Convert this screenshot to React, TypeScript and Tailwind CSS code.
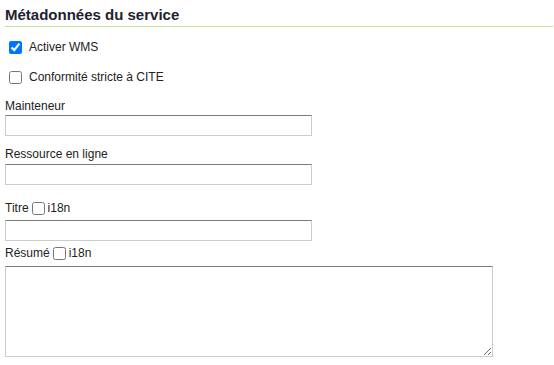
import React from 'react'

const inputCls =
  'block w-[307px] h-[21px] border border-[#cccccc] border-t-[#7a7a7a] bg-white'

const App: React.FC = () => {
  return (
    <div className="min-h-[365px] bg-white pl-[5px] pr-[1px] text-[12px] leading-[15px] text-[#222] font-['Liberation_Sans',Arial,sans-serif]">
      <h3 className="pt-[7px] pb-[3px] text-[15px] leading-[16px] font-bold text-[#1e2230] border-b border-[#c3e09a]">
        Métadonnées du service
      </h3>

      <label className="flex items-center mt-[13px] h-[15px]">
        <input type="checkbox" defaultChecked className="w-[13px] h-[13px] ml-[4px] mr-[7px] accent-[#0075ff]" />
        Activer WMS
      </label>
      <label className="flex items-center mt-[15px] h-[15px]">
        <input type="checkbox" className="w-[13px] h-[13px] ml-[4px] mr-[7px]" />
        Conformité stricte à CITE
      </label>

      <div className="mt-[14px]">Mainteneur</div>
      <input type="text" className={inputCls + ' mt-[1px]'} />

      <div className="mt-[11px]">Ressource en ligne</div>
      <input type="text" className={inputCls + ' mt-[2px]'} />

      <div className="flex items-center mt-[16px] h-[15px]">
        Titre
        <input type="checkbox" className="w-[13px] h-[13px] mx-[3px]" />
        i18n
      </div>
      <input type="text" className={inputCls + ' mt-[4px]'} />

      <div className="flex items-center mt-[5px] h-[15px]">
        Résumé
        <input type="checkbox" className="w-[13px] h-[13px] mx-[3px]" />
        i18n
      </div>
      <textarea className="block mt-[5px] w-[488px] h-[91px] border border-[#cccccc] border-t-[#7a7a7a] bg-white" />
    </div>
  )
}

export default App
